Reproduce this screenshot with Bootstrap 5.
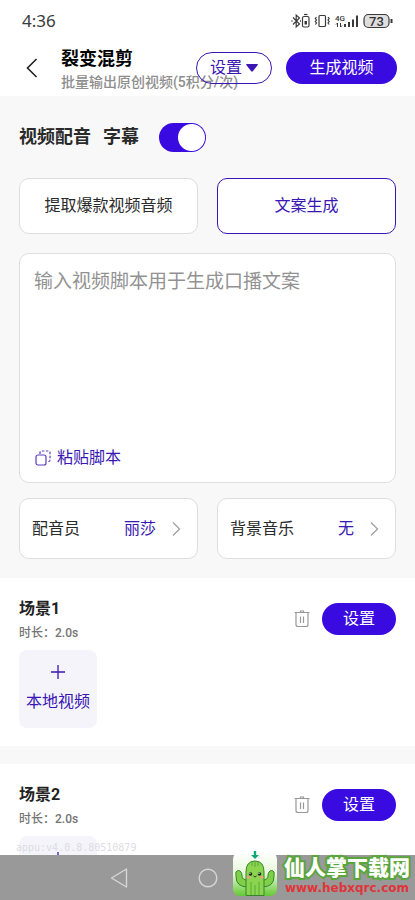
<!DOCTYPE html>
<html lang="zh-CN">
<head>
<meta charset="utf-8">
<meta name="viewport" content="width=device-width, initial-scale=1">
<title>裂变混剪</title>
<link href="https://cdn.jsdelivr.net/npm/bootstrap@5.3.0/dist/css/bootstrap.min.css" rel="stylesheet">
<style>
:root { --brand: #3a0be0; --brand-ink: #3a17b4; --line: #dedede; --page: #f8f8f8; --side: 19px; }
body { font-family: Roboto, "Noto Sans CJK SC", sans-serif; font-size: 16px; line-height: 24px; color: #222; background: #fff; }
.side { padding-left: var(--side); padding-right: var(--side); }
.status-bar { height: 40px; padding: 2px 22px 0; color: #3a3a3a; }
.clock { font-family: "Noto Sans", sans-serif; font-size: 17px; }
.top-head { height: 56px; padding-right: 18px; }
.back-btn { width: 61px; padding-left: 26px; }
.head-text { width: 0; padding-top: 3px; }
.heading { font-size: 18px; line-height: 24px; font-weight: 700; color: #000; }
.subline { font-size: 14px; line-height: 22px; color: #8e8e8e; font-weight: 500; }
.head-actions { gap: 14px; }
.pill { height: 32px; border-radius: 16px; padding: 0; font-size: 16px; line-height: 24px; }
.pill-main, .pill-main:hover { background: var(--brand); color: #fff; border: 0; }
.pill-wide { width: 111px; }
.pill-set { width: 74px; }
.pill-line, .pill-line:hover { width: 76px; border: 1px solid var(--brand-ink); color: var(--brand-ink); background: transparent; }
.panel { background: var(--page); padding-top: 25px; padding-bottom: 19px; }
.section-name { font-size: 18px; line-height: 32px; font-weight: 700; gap: 12px; color: #2a2a2a; }
.form-switch .form-check-input.toggle { width: 47px; height: 29px; margin: 0; float: none; border: 0; background-color: #ccc;
  background-image: radial-gradient(circle, #fff 13px, transparent 14px); background-size: 29px 29px; background-repeat: no-repeat; }
.form-switch .form-check-input.toggle:checked { background-color: var(--brand); }
.dub-row { margin-bottom: 25px; }
.duo { display: grid; grid-template-columns: 1fr 1fr; gap: var(--side); }
.tile, .tile:hover { background: #fff; border: 1px solid var(--line); border-radius: 10px; color: #2a2a2a; }
.tile-tab { height: 56px; font-size: 16px; }
.tile-tab.chosen { border-color: var(--brand-ink); color: var(--brand-ink); }
.tile-pick { height: 61px; padding: 0 15px 0 12px; }
.script-box { height: 230px; padding: 15px 14px 12px; margin: 19px 0 15px; }
.script-box textarea { resize: none; border: 0; font-size: 19px; line-height: 26px; outline: 0; }
.script-box textarea::placeholder { color: #929292; }
.ink { color: var(--brand-ink); }
.scene { padding-top: 19px; padding-bottom: 18px; background: #fff; }
.scene-name { font-size: 16px; line-height: 24px; font-weight: 700; color: #222; }
.scene-time { font-size: 12px; line-height: 24px; font-weight: 500; color: #747474; }
.add-tile, .add-tile:hover { width: 78px; height: 78px; border: 0; border-radius: 8px; background: #f5f4fb; color: var(--brand-ink); padding: 0; gap: 10px; margin-top: 5px; }
.divider { height: 18px; background: var(--page); }
.sys-nav { height: 45px; background: #999; }
.nav-keys { gap: 70px; width: 196px; }
.build-tag { left: 16px; bottom: 45px; font: 10px/14px "DejaVu Sans Mono", monospace; color: #dcdce2; }
.stamp { right: 5px; bottom: 0; gap: 6px; height: 49px; }
.stamp-name { font-size: 21px; line-height: 26px; font-weight: 900; color: #fff; -webkit-text-stroke: 4px #5aa53c; paint-order: stroke fill; }
.stamp-url, .stamp-url:hover { font: bold 12px/14px "DejaVu Sans", sans-serif; color: #e0343a; text-decoration: none; }
</style>
<script src="https://cdn.jsdelivr.net/npm/bootstrap@5.3.0/dist/js/bootstrap.bundle.min.js"></script>
</head>
<body>
<div class="vh-100 d-flex flex-column overflow-hidden position-relative">

  <div class="status-bar d-flex flex-shrink-0 align-items-center justify-content-between">
    <span class="clock">4:36</span>
    <svg width="102" height="18" viewBox="0 0 102 18" fill="none" stroke="#3a3a3a" stroke-width="1.2" role="img" aria-label="蓝牙 震动 4G 电量 73">
      <path d="M2 5.500 8.500 12 5.200 15V3L8.500 6 2 12.500"/><path d="M.5 9h1M9 9h1" stroke-width="1.500"/>
      <rect x="11.500" y="4.500" width="6.500" height="10.500" rx="1.500"/><path d="M13 2.500h3.500"/><path d="M13.500 9h2.500v3.500h-2.500z" fill="#3a3a3a" stroke="none"/>
      <rect x="28" y="3.500" width="6.500" height="11" rx="1"/><path d="M25.500 5l-1.200 1.500 1.200 1.500-1.200 1.500 1.200 1.500-1.200 1.500M37 5l1.200 1.500L37 8l1.200 1.500L37 11l1.200 1.500"/>
      <text x="44" y="8.500" font-family="Roboto, sans-serif" font-size="8" font-weight="500" fill="#3a3a3a" stroke="none">4G</text>
      <path d="M46.500 11v4M45 12.500 46.500 11M49.500 11v4M51 13.500 49.500 15" stroke-width="1"/>
      <path d="M54 15v-3M58 15v-5M62 15V7.500M66 15V3.500" stroke-width="2"/>
      <rect x="73" y="2.500" width="25" height="13" rx="4.500" fill="#dedede"/><path d="M100.500 7v4" stroke-width="2"/>
      <text x="85.500" y="13.500" text-anchor="middle" font-family="Roboto, sans-serif" font-size="13" font-weight="500" fill="#333" stroke="none">73</text>
    </svg>
  </div>

  <header class="top-head d-flex flex-shrink-0 align-items-center">
    <button type="button" class="btn back-btn border-0 rounded-0 py-0 pe-0 text-start flex-shrink-0" aria-label="返回">
      <svg class="d-block" width="12" height="20" viewBox="0 0 12 20" fill="none" stroke="#222" stroke-width="1.600"><path d="M10.500 1 1.500 10l9 9"/></svg>
    </button>
    <div class="head-text flex-grow-1 text-nowrap">
      <h1 class="heading m-0">裂变混剪</h1>
      <div class="subline">批量输出原创视频(5积分/次)</div>
    </div>
    <div class="head-actions d-flex flex-shrink-0">
      <button type="button" class="btn pill pill-line d-flex align-items-center justify-content-center gap-1">设置
        <svg width="12" height="8" viewBox="0 0 12 8" fill="#3a17b4"><path d="M.6 0h10.800q.8.300.3 1L6.800 7.300q-.8.700-1.600 0L.3 1Q-.1.300.6 0z"/></svg>
      </button>
      <button type="button" class="btn pill pill-main pill-wide">生成视频</button>
    </div>
  </header>

  <main class="flex-grow-1 overflow-hidden">
    <section class="panel side">
      <div class="dub-row form-check form-switch d-flex align-items-center p-0">
        <label class="section-name d-flex me-3 pe-1" for="dub"><span>视频配音</span><span>字幕</span></label>
        <input class="form-check-input toggle" type="checkbox" role="switch" id="dub" checked>
      </div>
      <div class="duo">
        <button type="button" class="btn tile tile-tab p-0">提取爆款视频音频</button>
        <button type="button" class="btn tile tile-tab chosen p-0">文案生成</button>
      </div>
      <div class="tile script-box d-flex flex-column">
        <textarea class="w-100 flex-grow-1 p-0" aria-label="视频脚本" placeholder="输入视频脚本用于生成口播文案"></textarea>
        <button type="button" class="btn border-0 p-0 d-flex align-items-center align-self-start ink">
          <svg class="me-1" width="19" height="18" viewBox="0 0 19 18" fill="none" stroke="#5a3cc0" stroke-width="1.200"><rect x="2" y="6" width="10" height="10" rx="2"/><path d="M6 5V3.500Q6 2 7.500 2H14.500Q16 2 16 3.500V11Q16 12.500 14.500 12.500H13" stroke-dasharray="2.500 1.500"/></svg>粘贴脚本
        </button>
      </div>
      <div class="duo">
        <button type="button" class="btn tile tile-pick d-flex align-items-center justify-content-between">
          <span>配音员</span>
          <span class="d-flex align-items-center gap-3 ink">丽莎<svg width="10" height="16" viewBox="0 0 10 16" fill="none" stroke="#a0a0a0" stroke-width="1.300"><path d="M1 1.500 7.500 8 1 14.500"/></svg></span>
        </button>
        <button type="button" class="btn tile tile-pick d-flex align-items-center justify-content-between">
          <span>背景音乐</span>
          <span class="d-flex align-items-center gap-3 ink">无<svg width="10" height="16" viewBox="0 0 10 16" fill="none" stroke="#a0a0a0" stroke-width="1.300"><path d="M1 1.500 7.500 8 1 14.500"/></svg></span>
        </button>
      </div>
    </section>

    <section class="scene side">
      <div class="d-flex justify-content-between">
        <div><h2 class="scene-name m-0">场景1</h2><div class="scene-time">时长：2.0s</div></div>
        <div class="d-flex align-items-center gap-2 pb-1">
          <button type="button" class="btn border-0 p-0" aria-label="删除场景1">
            <svg class="d-block me-1" width="16" height="18" viewBox="0 0 16 18" fill="none" stroke="#999" stroke-width="1.200"><path d="M.5 2.500h15M6.500 2V1h3v1M2 2.500v12Q2 16.500 4 16.500h8q2 0 2-2v-12M6.500 6.500v6.500M9.500 6.500v6.500"/></svg>
          </button>
          <button type="button" class="btn pill pill-main pill-set">设置</button>
        </div>
      </div>
      <button type="button" class="btn add-tile d-flex flex-column align-items-center justify-content-center">
        <svg width="16" height="16" viewBox="0 0 16 16" stroke="#3a17b4" stroke-width="1.300"><path d="M8 1v14M1 8h14"/></svg>
        本地视频
      </button>
    </section>

    <div class="divider"></div>

    <section class="scene side">
      <div class="d-flex justify-content-between">
        <div><h2 class="scene-name m-0">场景2</h2><div class="scene-time">时长：2.0s</div></div>
        <div class="d-flex align-items-center gap-2 pb-1">
          <button type="button" class="btn border-0 p-0" aria-label="删除场景2">
            <svg class="d-block me-1" width="16" height="18" viewBox="0 0 16 18" fill="none" stroke="#999" stroke-width="1.200"><path d="M.5 2.500h15M6.500 2V1h3v1M2 2.500v12Q2 16.500 4 16.500h8q2 0 2-2v-12M6.500 6.500v6.500M9.500 6.500v6.500"/></svg>
          </button>
          <button type="button" class="btn pill pill-main pill-set">设置</button>
        </div>
      </div>
      <button type="button" class="btn add-tile d-flex flex-column align-items-center justify-content-start pt-3" aria-label="本地视频">
        <svg width="16" height="16" viewBox="0 0 16 16" stroke="#3a17b4" stroke-width="1.300"><path d="M8 0v15M1 8h14"/></svg>
      </button>
    </section>
  </main>

  <nav class="sys-nav d-flex flex-shrink-0 align-items-center justify-content-center" aria-label="系统导航">
    <div class="nav-keys d-flex align-items-center">
      <button type="button" class="btn border-0 p-0" aria-label="后退">
        <svg class="d-block" width="18" height="20" viewBox="0 0 18 20" fill="none" stroke="#d6d6d6" stroke-width="1.400" stroke-linejoin="round"><path d="M16.500 1v18L1.500 10z"/></svg>
      </button>
      <button type="button" class="btn border-0 p-0" aria-label="主页">
        <svg class="d-block" width="20" height="20" viewBox="0 0 20 20" fill="none" stroke="#d6d6d6" stroke-width="1.400"><circle cx="10" cy="10" r="8.800"/></svg>
      </button>
    </div>
  </nav>

  <div class="build-tag position-absolute">appu:v4.0.8.80510879</div>

  <div class="stamp position-absolute d-flex">
    <svg width="46" height="48" viewBox="0 0 46 48" aria-hidden="true">
      <defs><linearGradient id="sky" x1="0" y1="0" x2="0" y2="1"><stop offset="0" stop-color="#fff"/><stop offset=".5" stop-color="#e6f8d8"/><stop offset="1" stop-color="#62c832"/></linearGradient></defs>
      <rect x="1" y="1" width="44" height="44" rx="7" fill="url(#sky)"/>
      <g stroke="#35852b" stroke-linejoin="round">
        <path d="M16 36Q4 36 4 25.500V24Q3 20 6.500 19.500 10 20 10 25q0 4 6 4zM30 36Q42 36 42 25.500V24Q43 20 39.500 19.500 36 20 36 25q0 4-6 4z" fill="#7fcf49"/>
        <path d="M14 44.500V21Q14 10 23 10t9 11V44.500z" fill="#8bd450"/>
        <path d="M19 44V31M27 44V31M23 44V34M20 11v4M26 11v4M23 10v6" fill="none" stroke="#4d9f34" stroke-width=".8"/>
      </g>
      <g fill="#1f2a1a"><circle cx="18.500" cy="23" r="1.800"/><circle cx="27.500" cy="23" r="1.800"/></g>
      <g fill="#fff"><circle cx="18" cy="22.400" r=".6"/><circle cx="27" cy="22.400" r=".6"/></g>
      <g fill="#f79a86"><ellipse cx="16.500" cy="26.300" rx="1.800" ry="1.200"/><ellipse cx="29.500" cy="26.300" rx="1.800" ry="1.200"/></g>
      <path d="M21.500 25q1.500 2 3 0" fill="none" stroke="#1f2a1a" stroke-width=".9"/>
      <path d="M21.800 0h2.400v4H27l-4 4-4-4h2.800z" fill="#12a67a"/>
    </svg>
    <div class="d-flex flex-column align-items-center text-nowrap">
      <span class="stamp-name pt-1">仙人掌下载网</span>
      <a class="stamp-url" href="#">www.hebxqrc.com</a>
    </div>
  </div>
</div>
</body>
</html>
